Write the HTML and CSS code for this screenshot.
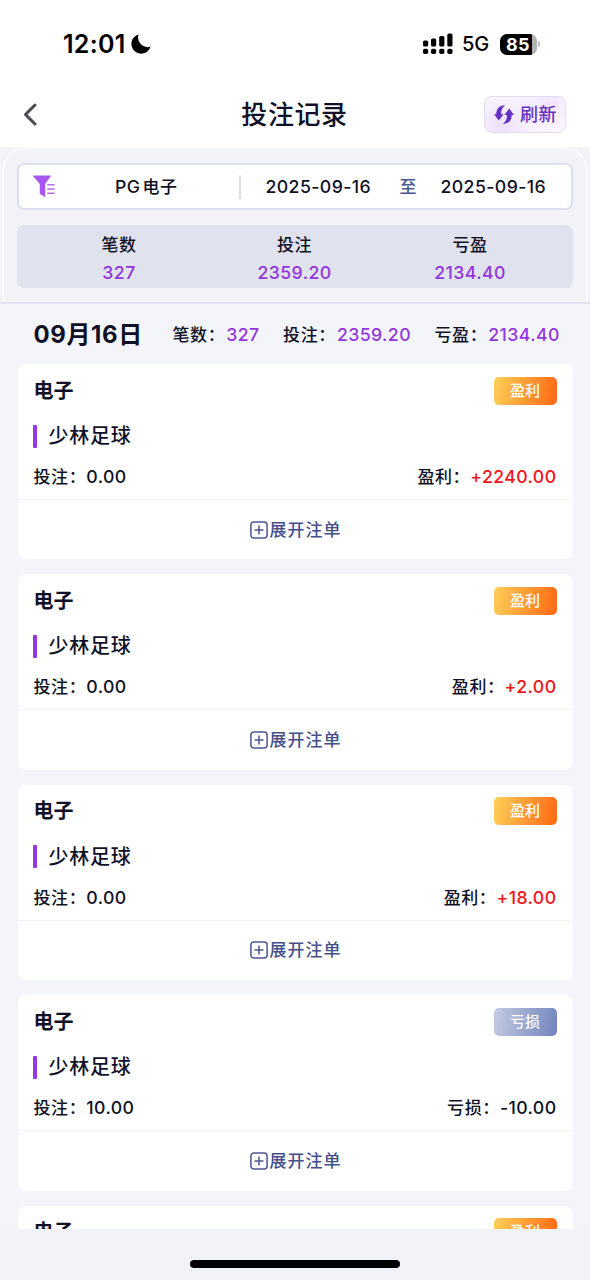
FILE: index.html
```html
<!DOCTYPE html>
<html lang="zh-CN">
<head>
<meta charset="utf-8">
<title>投注记录</title>
<link rel="stylesheet" href="styles.css">
</head>
<body>
<div class="screen">
  <div class="status">
    <span class="time">12:01</span>
    <svg class="moon" width="20" height="20" viewBox="0 0 20 20"><path d="M7.600.4A9.800 9.800 0 1 0 19.600 12.600 9.600 9.600 0 0 1 7.600.4z"/></svg>
    <svg class="signal" width="30" height="22" viewBox="0 0 30 22"><rect x="0" y="7.500" width="5.200" height="6" rx="1.600"/><rect x="8" y="5.500" width="5.200" height="8" rx="1.600"/><rect x="16.200" y="3" width="5.200" height="10.500" rx="1.600"/><rect x="24.300" y="0.500" width="5.200" height="13" rx="1.600"/><rect x="0" y="15.800" width="5.200" height="5.200" rx="1.800"/><rect x="8" y="15.800" width="5.200" height="5.200" rx="1.800"/><rect x="16.200" y="15.800" width="5.200" height="5.200" rx="1.800"/><rect x="24.300" y="15.800" width="5.200" height="5.200" rx="1.800"/></svg>
    <span class="network">5G</span>
    <span class="battery">85</span><span class="battery-tip"></span>
  </div>
  <header class="nav">
    <svg class="back" width="14" height="23" viewBox="0 0 14 23"><path d="M12 2L2.500 11.500L12 21"/></svg>
    <h1 class="title">投注记录</h1>
    <button class="refresh"><svg width="20" height="20" viewBox="0 0 20 20"><path d="M11.200.3C5.300.2 2.200 4 2.300 9.300H0L4.800 15.600 9.600 9.300H7.200C6.700 5.800 7.900 2.800 11.200.3z"/><path d="M8.800 18.900C14.700 19 17.800 15.200 17.700 9.900H20L15.200 3.600 10.400 9.900H12.800C13.300 13.400 12.100 16.400 8.800 18.900z"/></svg><span>刷新</span></button>
  </header>
  <section class="panel-wrap"><div class="panel">
    <div class="filter">
      <svg class="funnel" width="23" height="23" viewBox="0 0 23 23"><path d="M.8.5H17.200Q18.200.5 17.600 1.400L12.200 8.700V22.300L6.800 18.800V9L.4 1.400Q-.2.5.8.5z"/><path d="M14.300 9.800H21.600M14.300 14H21.600M14.300 18.200H21.600" class="funnel-lines"/></svg>
      <span class="vendor"><em>PG</em><i></i>电子</span>
      <span class="rule"></span>
      <span class="date">2025-09-16</span>
      <span class="to">至</span>
      <span class="date">2025-09-16</span>
    </div>
    <div class="totals">
      <div><span>笔数</span><b>327</b></div>
      <div><span>投注</span><b>2359.20</b></div>
      <div><span>亏盈</span><b>2134.40</b></div>
    </div>
  </div></section>
  <main class="list">
    <div class="day">
      <h2>09月16日</h2>
      <span class="stat">笔数：<b>327</b></span>
      <span class="stat">投注：<b>2359.20</b></span>
      <span class="stat">亏盈：<b>2134.40</b></span>
    </div>
    <article class="card">
      <div class="head"><h3>电子</h3><span class="badge">盈利</span></div>
      <div class="game">少林足球</div>
      <div class="sums"><span>投注：<em>0.00</em></span><span>盈利：<em class="win">+2240.00</em></span></div>
      <div class="expand"><svg width="18" height="18" viewBox="0 0 18 18"><rect x=".9" y=".9" width="16.200" height="16.200" rx="3"/><path d="M4.500 9H13.500M9 4.500V13.500"/></svg><span>展开注单</span></div>
    </article>
    <article class="card">
      <div class="head"><h3>电子</h3><span class="badge">盈利</span></div>
      <div class="game">少林足球</div>
      <div class="sums"><span>投注：<em>0.00</em></span><span>盈利：<em class="win">+2.00</em></span></div>
      <div class="expand"><svg width="18" height="18" viewBox="0 0 18 18"><rect x=".9" y=".9" width="16.200" height="16.200" rx="3"/><path d="M4.500 9H13.500M9 4.500V13.500"/></svg><span>展开注单</span></div>
    </article>
    <article class="card">
      <div class="head"><h3>电子</h3><span class="badge">盈利</span></div>
      <div class="game">少林足球</div>
      <div class="sums"><span>投注：<em>0.00</em></span><span>盈利：<em class="win">+18.00</em></span></div>
      <div class="expand"><svg width="18" height="18" viewBox="0 0 18 18"><rect x=".9" y=".9" width="16.200" height="16.200" rx="3"/><path d="M4.500 9H13.500M9 4.500V13.500"/></svg><span>展开注单</span></div>
    </article>
    <article class="card">
      <div class="head"><h3>电子</h3><span class="badge loss">亏损</span></div>
      <div class="game">少林足球</div>
      <div class="sums"><span>投注：<em>10.00</em></span><span>亏损：<em>-10.00</em></span></div>
      <div class="expand"><svg width="18" height="18" viewBox="0 0 18 18"><rect x=".9" y=".9" width="16.200" height="16.200" rx="3"/><path d="M4.500 9H13.500M9 4.500V13.500"/></svg><span>展开注单</span></div>
    </article>
    <article class="card">
      <div class="head"><h3>电子</h3><span class="badge">盈利</span></div>
    </article>
  </main>
  <footer class="home"><span></span></footer>
</div>
</body>
</html>
```
FILE: styles.css
```css
* { box-sizing: border-box; margin: 0; padding: 0; }
body { background: #f4f5fa; }
.screen {
  width: 590px; height: 1280px; overflow: hidden;
  display: flex; flex-direction: column;
  font-family: Inter, "Noto Sans CJK SC", sans-serif;
  font-size: 17px; font-weight: 500; line-height: 24px;
  letter-spacing: .6px; color: #101126; white-space: nowrap;
}
i { font-style: normal; }
b, em, .date { font-size: 17.700px; font-weight: 500; font-style: normal; letter-spacing: .4px; }
.status { flex: none; height: 88px; background: #fff; display: flex; align-items: center; padding-left: 63px; color: #000; }
.time { font-size: 25px; font-weight: 600; letter-spacing: .3px; width: 68px; }
.moon { width: 20px; }
.signal { margin-left: 272px; }
.network { font-size: 20px; letter-spacing: 0; margin-left: 9px; width: 38px; }
.battery {
  width: 37px; height: 21px; border-radius: 7px; color: #fff;
  background: linear-gradient(90deg, #000 0 32px, #b2b2b2 32px);
  font-size: 18px; font-weight: 700; line-height: 21px; letter-spacing: .3px; padding-left: 6px;
}
.battery-tip { width: 2px; height: 6px; margin-left: 1px; border-radius: 0 2px 2px 0; background: #bbb; }
.nav { flex: none; height: 59px; background: #fff; display: flex; align-items: center; padding: 0 24px 7px 23px; justify-content: space-between; }
.back { width: 14px; margin-right: 68px; fill: none; stroke: #494950; stroke-width: 3; stroke-linecap: round; stroke-linejoin: round; }
.title { font-size: 26px; font-weight: 500; line-height: 36px; letter-spacing: .6px; padding-top: 1px; }
.refresh {
  width: 82px; height: 37px; border: 1.500px solid #e3daf4; border-radius: 8px;
  background: radial-gradient(circle at 78% 20%, #f2e4fc, transparent 60%), radial-gradient(circle at 20% 80%, #ecdffb, transparent 60%), #fff;
  display: flex; align-items: center; gap: 6px; padding: 1px 0 0 9px;
  font: 500 18px/30px Inter, "Noto Sans CJK SC", sans-serif; color: #6730bd; letter-spacing: .4px;
}
.refresh svg { flex: none; fill: #6730c5; }
.panel-wrap { flex: none; height: 157px; border-bottom: 2px solid #e0e2ee; padding: 0 2px; background: #f2f3f6; }
.panel { height: 155px; border: 2.500px solid #fafafd; border-bottom: 0; border-radius: 24px 24px 0 0; background: #f1f3f8; padding: 14px 13px 0; }
.filter { height: 47px; border: 2px solid #dcdfed; border-radius: 7px; background: #fff; display: flex; align-items: center; padding-left: 14px; }
.funnel { fill: #a855f2; flex: none; }
.funnel-lines { fill: none; stroke: #b36bed; stroke-width: 1.600; }
.vendor { flex: none; margin-left: 59px; width: 124px; }
.vendor i { display: inline-block; width: 2px; }
.rule { flex: none; width: 1.500px; height: 24px; background: #dddcea; margin-right: 25px; }
.date { flex: none; width: 134px; }
.to { flex: none; color: #485991; width: 41px; }
.totals { height: 63px; margin-top: 15px; border-radius: 7px; background: #e0e3ed; display: grid; grid-template-columns: 204px 147px 204px; text-align: center; padding-top: 6px; }
.totals div { display: flex; flex-direction: column; line-height: 28px; }
.totals b, .stat b { color: #9335dc; }
.list { flex: 1; min-height: 0; overflow: hidden; padding: 0 17.500px; }
.day { height: 60px; display: flex; align-items: center; padding: 1px 0 0 16px; }
.day h2 { flex: none; font-size: 24px; font-weight: 700; letter-spacing: .6px; width: 139px; }
.stat { flex: none; margin-right: 23.500px; }
.stat b { margin-left: 1px; }
.card { height: 195.400px; margin-bottom: 15px; border-radius: 7px; background: #fff; }
.head { height: 53px; display: flex; justify-content: space-between; align-items: center; padding: 0 16px; }
.head h3 { font-size: 20px; font-weight: 700; letter-spacing: 0; }
.badge { width: 63px; height: 28px; border-radius: 5px; background: linear-gradient(100deg, #ffd057, #ff7018 92%); color: #fff; font-size: 15px; font-weight: 500; line-height: 28px; text-align: center; letter-spacing: 0; }
.badge.loss { background: linear-gradient(100deg, #c3cae2, #7284bd); }
.game { height: 38px; display: flex; align-items: center; padding-left: 15.500px; font-size: 20px; letter-spacing: .75px; }
.game::before { content: ""; width: 4px; height: 23px; border-radius: 1px; background: #9636dc; margin-right: 11.500px; }
.sums { height: 45px; border-bottom: 1px solid #f3f3f8; display: flex; justify-content: space-between; align-items: center; padding: 0 16px; }
.win { color: #f01418; }
.expand { height: 59px; display: flex; align-items: center; justify-content: center; gap: 2px; padding-left: 1px; color: #454f8a; letter-spacing: 1px; }
.expand svg { fill: none; stroke: #4d5790; stroke-width: 1.500; }
.home { flex: none; height: 51px; background: #f2f3f8; display: flex; justify-content: center; padding-top: 31px; }
.home span { width: 210px; height: 8px; border-radius: 4px; background: #000; }
```
